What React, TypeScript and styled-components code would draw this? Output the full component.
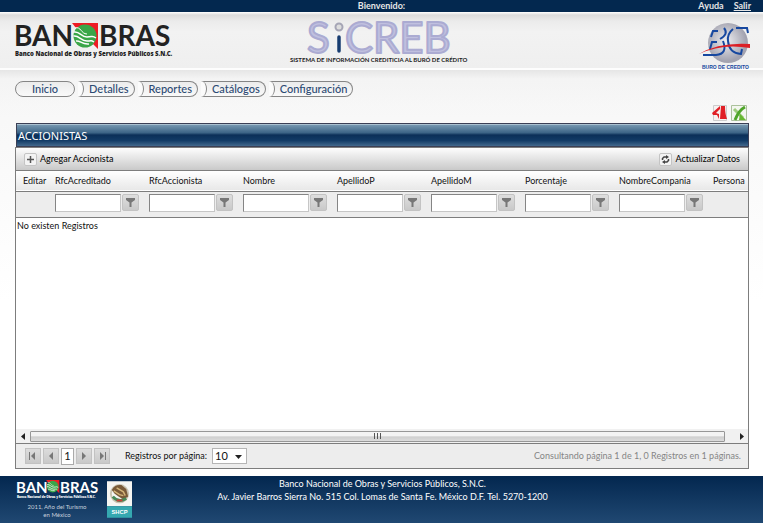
import React from "react";
import styled, { createGlobalStyle } from "styled-components";

const GlobalStyle = createGlobalStyle`
  *, *::before, *::after { box-sizing: border-box; }
  html, body, #root { height: 100%; }
  body {
    margin: 0;
    background: #fff;
    color: #111;
    font: 9px/14px Lato, "Open Sans", sans-serif;
  }
  button, input, select { font: inherit; color: inherit; margin: 0; padding: 0; }
  button { cursor: pointer; }
`;

const edge = "#7d7d7d";

const Page = styled.div`
  display: flex;
  flex-direction: column;
  min-height: 100%;
  background: linear-gradient(#f2f2f2, #f8f8f8 120px, #fff 300px);
`;

const TopBar = styled.div`
  display: grid;
  grid-template-columns: 1fr auto 1fr;
  align-items: center;
  height: 12px;
  padding: 0 12px;
  background: #03284f;
  color: #e6e6e6;
  font-weight: 700;
  line-height: 12px;
`;

const TopLinks = styled.nav`
  display: flex;
  justify-content: flex-end;
  gap: 10px;
`;

const TopLink = styled.a<{ $underlined?: boolean }>`
  color: inherit;
  text-decoration: ${(p) => (p.$underlined ? "underline" : "none")};
`;

const Header = styled.header`
  display: grid;
  grid-template-columns: 1fr auto 1fr;
  height: 58px;
  padding: 8px 12px 0 15px;
  border-bottom: 2px solid #fdfdfd;
  background: linear-gradient(#fff, #dcdcdc 3px, #ebebeb 9px, #f2f2f2 20px, #efefef);

  & > :last-child { justify-self: end; }
`;

const Drawing = styled.svg`
  display: block;
  overflow: visible;
`;

const Menu = styled.nav`
  display: flex;
  gap: 3px;
  padding: 11px 15px 8px;
  background: linear-gradient(#e6e6e6, #f4f4f4 9px, transparent);
`;

const MenuButton = styled.button<{ $first?: boolean }>`
  position: relative;
  height: 16px;
  padding: ${(p) => (p.$first ? "0 16px" : "0 5px 0 11px")};
  border: 1px solid #858585;
  border-left-width: ${(p) => (p.$first ? "1px" : "0")};
  border-radius: ${(p) => (p.$first ? "8px" : "0 8px 8px 0")};
  background: linear-gradient(#ececec, #f9f9f9);
  color: #2c4a73;
  font-size: 11px;
  font-weight: 500;

  &::before {
    content: "";
    display: ${(p) => (p.$first ? "none" : "block")};
    position: absolute;
    inset: -1px auto -1px 0;
    width: 6px;
    border: solid #858585;
    border-width: 0 1px 0 0;
    border-radius: 0 6px 6px 0 / 0 8px 8px 0;
    background: #fbfbfb;
  }
`;

const Content = styled.main`
  display: flex;
  flex: 1;
  flex-direction: column;
  padding: 0 14px 7px 15px;
`;

const ExportBar = styled.div`
  display: flex;
  justify-content: flex-end;
  gap: 3px;
  padding: 0 2px 2px 0;
`;

const ExportButton = styled.button`
  display: flex;
  border: 0;
  background: none;
`;

const Title = styled.h1`
  margin: 0 0 0 1px;
  height: 24px;
  padding-left: 1px;
  border: 1px solid #3b3f55;
  box-shadow: inset 0 1px #a9c0d0;
  background: linear-gradient(#7c9db5, #3c6486 40%, #0b2f58 50%, #123b66 75%, #42688c);
  color: #fff;
  font: 400 11px/24px "Noto Sans", sans-serif;
`;

const Panel = styled.section`
  display: flex;
  flex: 1;
  flex-direction: column;
  border: 1px solid ${edge};
  background: #fff;
`;

const Toolbar = styled.div`
  display: flex;
  justify-content: space-between;
  align-items: center;
  height: 23px;
  padding: 0 8px;
  border-bottom: 1px solid ${edge};
  background: linear-gradient(#fdfdfd, #c9c9c9);
`;

const ToolButton = styled.button`
  display: flex;
  align-items: center;
  gap: 3px;
  border: 0;
  background: none;
  color: #000;
`;

const ToolIcon = styled.svg`
  width: 13px;
  height: 13px;
  border: 1px solid #c4c4c4;
  border-radius: 2px;
  background: #f3f3f3;
`;

const Table = styled.table`
  width: 100%;
  table-layout: fixed;
  border-collapse: collapse;
`;

const Col = styled.col<{ $width?: number }>`
  width: ${(p) => (p.$width ? `${p.$width}px` : "auto")};
`;

const HeadRow = styled.tr`
  height: 20px;
  border-bottom: 1px solid ${edge};
  background: linear-gradient(#fff, #e8e8e8);
`;

const FilterRow = styled.tr`
  height: 26px;
  border-bottom: 1px solid ${edge};
  background: #ededed;
`;

const HeadCell = styled.th`
  padding: 1px 0 0 7px;
  font-weight: 400;
  text-align: left;
  white-space: nowrap;
`;

const FilterCell = styled.td`
  padding: 0 0 3px 7px;
`;

const Filter = styled.div`
  display: flex;
  gap: 1px;
`;

const FilterInput = styled.input`
  width: 66px;
  height: 18px;
  padding: 0 2px;
  border: 1px solid #c6c6c6;
  border-top-color: #858585;
  border-left-color: #858585;
  background: #fff;
`;

const FilterButton = styled.button`
  display: grid;
  place-items: center;
  width: 17px;
  height: 17px;
  border: 1px solid #c3c3c3;
  border-radius: 2px;
  background: linear-gradient(#dedede, #c9c9c9);
`;

const EmptyCell = styled.td`
  padding: 1px;
`;

const Scrollbar = styled.div`
  display: flex;
  align-items: center;
  height: 14px;
  margin-top: auto;
  background: #f1f1f1;
`;

const ScrollArrow = styled.button`
  display: grid;
  place-items: center;
  width: 14px;
  border: 0;
  background: none;
`;

const ScrollTrack = styled.div`
  flex: 1;
  padding-right: 9px;
`;

const ScrollThumb = styled.div`
  display: flex;
  justify-content: center;
  align-items: center;
  gap: 2px;
  height: 11px;
  border: 1px solid #979797;
  border-radius: 1px;
  background: linear-gradient(#f3f3f3 40%, #cfcfcf 55%, #dcdcdc);
`;

const Grip = styled.span`
  width: 1px;
  height: 6px;
  background: #555;
`;

const Pager = styled.div`
  display: flex;
  justify-content: space-between;
  align-items: center;
  height: 25px;
  padding: 0 7px 0 9px;
  border-top: 1px solid ${edge};
  background: #ededed;
`;

const PagerGroup = styled.div`
  display: flex;
  align-items: center;
  gap: 2px;
`;

const PageButton = styled.button<{ $current?: boolean }>`
  display: grid;
  place-items: center;
  width: ${(p) => (p.$current ? "13px" : "16px")};
  height: ${(p) => (p.$current ? "17px" : "16px")};
  border: 1px solid ${(p) => (p.$current ? "#aaa" : "#c2c2c2")};
  background: ${(p) => (p.$current ? "#fff" : "linear-gradient(#dcdcdc, #c9c9c9)")};
  font-size: 11px;
`;

const SizeLabel = styled.label`
  display: flex;
  align-items: center;
  gap: 5px;
  margin-left: 13px;
`;

const SelectBox = styled.span`
  display: grid;
  align-items: center;
  width: 35px;
  height: 16px;
  border: 1px solid #b5b5b5;
  background: #fff;

  & > * { grid-area: 1 / 1; }
  & > svg { justify-self: end; margin-right: 4px; pointer-events: none; }
`;

const SizeSelect = styled.select`
  width: 100%;
  padding-left: 2px;
  border: 0;
  background: none;
  appearance: none;
  font-size: 11px;
`;

const Summary = styled.span`
  color: #858585;
`;

const Footer = styled.footer`
  display: grid;
  grid-template-columns: 1fr auto 1fr;
  height: 47px;
  padding: 0 15px 0 17px;
  background: linear-gradient(#03274f, #204872);
  color: #fff;
`;

const FooterLogos = styled.div`
  display: flex;
  gap: 8px;
  padding-top: 5px;
`;

const Address = styled.address`
  padding-top: 1px;
  font-style: normal;
  line-height: 13px;
  text-align: center;
`;

function Emblem() {
  return (
    <g>
      <path d="M57 0H83V26L77 20L61 5Z" fill="#ee1c25" />
      <circle cx="70" cy="13" r="11.5" fill="#3aa648" />
      <path d="M59 9C65 8 66 14 72 14S77 12 81 15M58.500 13C64 12 66 18 72 18S76 17 79 19M61 18C65 17 67 22 74 21" fill="none" stroke="#fff" strokeWidth="1.500" />
      <path d="M60 5C66 3 66 11 72 11" fill="none" stroke="#fff" strokeWidth="1" />
    </g>
  );
}

function Banobras() {
  return (
    <Drawing width="158" height="38" viewBox="0 -3 158 38" role="img" aria-label="Banobras">
      <g fill="#222" fontFamily="Lato, sans-serif" fontSize="28" fontWeight="700">
        <text x="-1" y="23">BAN</text>
        <text x="84" y="23">BRAS</text>
      </g>
      <text x="0" y="33" fill="#222" fontSize="6" fontWeight="900" fontFamily="Noto Sans, sans-serif">Banco Nacional de Obras y Servicios Públicos S.N.C.</text>
      <Emblem />
    </Drawing>
  );
}

function Sicreb() {
  return (
    <Drawing width="186" height="46" viewBox="0 0 186 46" role="img" aria-label="SiCREB">
      <g fontFamily="Lato, sans-serif" fontSize="42" fill="#c0c0df" stroke="#ababd2" strokeWidth="2" strokeLinejoin="round">
        <text x="17" y="33">S</text>
        <text x="55" y="33">CREB</text>
      </g>
      <circle cx="49" cy="7" r="3.500" fill="#ddd" stroke="#a5a5b5" strokeWidth="2" />
      <path d="M49 17V31" stroke="#173c70" strokeWidth="3.500" strokeLinecap="round" />
      <text x="0" y="42" fontFamily="Lato, sans-serif" fontSize="6" fontWeight="700" fill="#222">SISTEMA DE INFORMACIÓN CREDITICIA AL BURÓ DE CRÉDITO</text>
    </Drawing>
  );
}

function BuroLogo() {
  return (
    <Drawing width="52" height="50" viewBox="0 0 52 50" role="img" aria-label="Buró de Crédito">
      <defs>
        <radialGradient id="globe" cx="0.45" cy="0.45">
          <stop offset="0" stopColor="#efeff2" />
          <stop offset="1" stopColor="#a3a3b0" />
        </radialGradient>
      </defs>
      <circle cx="29" cy="23" r="20" fill="url(#globe)" />
      <g fill="none" stroke="#1748a0" strokeWidth="2">
        <path d="M12 17L14 11H19M25 8Q30 14 21 19" />
        <path d="M11 29L13 22H18M24 21Q29 34 17 35H4" />
        <path d="M49 13L48 8H37M34 9Q28 14 29 21Q30 33 42 34L43 29" />
      </g>
      <path d="M0 34Q20 22 51 24V28Q23 23 0 34Z" fill="#dc1f26" />
      <text x="3" y="49" fontFamily="Liberation Sans, sans-serif" fontSize="5" fontWeight="700" fill="#1748a0">BURO DE CREDITO</text>
    </Drawing>
  );
}

function Shcp() {
  return (
    <Drawing width="25" height="37" viewBox="0 0 26 38" role="img" aria-label="SHCP">
      <path d="M0 0H26V26H0Z" fill="#f5f5f2" />
      <path d="M0 26H26V38H0Z" fill="#35a8b0" />
      <circle cx="13" cy="13" r="9" fill="none" stroke="#c9c3b0" strokeWidth="2" />
      <path d="M5 9Q8 3 15 4L20 8L22 16L17 19L12 16L8 13Z" fill="#795a38" />
      <path d="M10 7L17 11L19 15M7 10L13 14L17 15" stroke="#d3b478" strokeWidth="1.500" fill="none" />
      <path d="M6 16Q12 23 20 18" stroke="#478957" strokeWidth="3" fill="none" />
      <path d="M10 20H16" stroke="#c74037" strokeWidth="2" />
      <text x="13" y="34" textAnchor="middle" fontFamily="Liberation Sans, sans-serif" fontSize="6" fontWeight="700" fill="#fff">SHCP</text>
    </Drawing>
  );
}

function PdfIcon() {
  return (
    <svg width="16" height="16" viewBox="0 0 16 16">
      <path d="M1.500 .5H14.500V15.500H1.500Z" fill="#f7f0f0" stroke="#ccc" />
      <path d="M9 1H13Q13 9 15 14H8Z" fill="#e01f26" />
      <path d="M8 1L0 8L1 10L5 10L7 14V9L4 8L8 4Z" fill="#e01f26" />
    </svg>
  );
}

function ExcelIcon() {
  return (
    <svg width="16" height="16" viewBox="0 0 16 16">
      <path d="M.5 .5H15.500V15.500H.5Z" fill="#f3f6ef" stroke="#abc19c" />
      <path d="M3 4L12 13" stroke="#9ccb7c" strokeWidth="3" />
      <path d="M14 2Q8 5 4 15" fill="none" stroke="#4fa52a" strokeWidth="3" />
      <path d="M9 9L15 15H8Z" fill="#65b72f" />
    </svg>
  );
}

function FunnelIcon() {
  return (
    <svg width="9" height="9" viewBox="0 0 9 9">
      <path d="M0 0H9V2L5.500 4.500V9H3.500V4.500L0 2Z" fill="#777" />
    </svg>
  );
}

type Step = "first" | "prev" | "next" | "last";

function StepIcon({ step }: { step: Step }) {
  const back = step === "first" || step === "prev";
  return (
    <svg width="8" height="8" viewBox="0 0 8 8" fill="#777">
      <path d={back ? "M6 0V8L2 4Z" : "M2 0V8L6 4Z"} />
      {step === "first" && <path d="M0 0H1V8H0Z" />}
      {step === "last" && <path d="M7 0H8V8H7Z" />}
    </svg>
  );
}

function ArrowIcon({ d }: { d: string }) {
  return (
    <svg width="7" height="7" viewBox="0 0 7 7">
      <path d={d} fill="#222" />
    </svg>
  );
}

const menu = ["Inicio", "Detalles", "Reportes", "Catálogos", "Configuración"];
const filtered = ["RfcAcreditado", "RfcAccionista", "Nombre", "ApellidoP", "ApellidoM", "Porcentaje", "NombreCompania"];

export default function App() {
  return (
    <Page>
      <GlobalStyle />
      <TopBar>
        <span />
        <span>Bienvenido:</span>
        <TopLinks>
          <TopLink href="#ayuda">Ayuda</TopLink>
          <TopLink href="#salir" $underlined>Salir</TopLink>
        </TopLinks>
      </TopBar>
      <Header>
        <Banobras />
        <Sicreb />
        <BuroLogo />
      </Header>
      <Menu>
        {menu.map((item, i) => (
          <MenuButton key={item} $first={i === 0}>{item}</MenuButton>
        ))}
      </Menu>
      <Content>
        <ExportBar>
          <ExportButton aria-label="Exportar a PDF"><PdfIcon /></ExportButton>
          <ExportButton aria-label="Exportar a Excel"><ExcelIcon /></ExportButton>
        </ExportBar>
        <Title>ACCIONISTAS</Title>
        <Panel>
          <Toolbar>
            <ToolButton>
              <ToolIcon viewBox="0 0 11 11">
                <path d="M5.500 2V9M2 5.500H9" stroke="#555" strokeWidth="1.500" />
              </ToolIcon>
              Agregar Accionista
            </ToolButton>
            <ToolButton>
              <ToolIcon viewBox="0 0 11 11">
                <path d="M2.500 6V4.500L4 3H7M8.500 5V6.500L7 8H4" fill="none" stroke="#444" strokeWidth="1.500" />
                <path d="M6 1L9 3L6 5ZM5 6L2 8L5 10Z" fill="#444" />
              </ToolIcon>
              Actualizar Datos
            </ToolButton>
          </Toolbar>
          <Table>
            <colgroup>
              <Col $width={32} />
              {filtered.map((name) => <Col key={name} $width={94} />)}
              <Col />
            </colgroup>
            <thead>
              <HeadRow>
                <HeadCell>Editar</HeadCell>
                {filtered.map((name) => <HeadCell key={name}>{name}</HeadCell>)}
                <HeadCell>Persona</HeadCell>
              </HeadRow>
              <FilterRow>
                <FilterCell />
                {filtered.map((name) => (
                  <FilterCell key={name}>
                    <Filter>
                      <FilterInput aria-label={name} />
                      <FilterButton aria-label={`Filtrar ${name}`}><FunnelIcon /></FilterButton>
                    </Filter>
                  </FilterCell>
                ))}
                <FilterCell />
              </FilterRow>
            </thead>
            <tbody>
              <tr>
                <EmptyCell colSpan={9}>No existen Registros</EmptyCell>
              </tr>
            </tbody>
          </Table>
          <Scrollbar>
            <ScrollArrow aria-label="Desplazar a la izquierda"><ArrowIcon d="M5 0V7L1 3.500Z" /></ScrollArrow>
            <ScrollTrack>
              <ScrollThumb><Grip /><Grip /><Grip /></ScrollThumb>
            </ScrollTrack>
            <ScrollArrow aria-label="Desplazar a la derecha"><ArrowIcon d="M2 0V7L6 3.500Z" /></ScrollArrow>
          </Scrollbar>
          <Pager>
            <PagerGroup>
              <PageButton aria-label="Primera"><StepIcon step="first" /></PageButton>
              <PageButton aria-label="Anterior"><StepIcon step="prev" /></PageButton>
              <PageButton $current>1</PageButton>
              <PageButton aria-label="Siguiente"><StepIcon step="next" /></PageButton>
              <PageButton aria-label="Última"><StepIcon step="last" /></PageButton>
              <SizeLabel>
                Registros por página:
                <SelectBox>
                  <SizeSelect defaultValue="10">
                    <option>10</option>
                    <option>20</option>
                    <option>50</option>
                  </SizeSelect>
                  <ArrowIcon d="M0 2H7L3.500 6Z" />
                </SelectBox>
              </SizeLabel>
            </PagerGroup>
            <Summary>Consultando página 1 de 1, 0 Registros en 1 páginas.</Summary>
          </Pager>
        </Panel>
      </Content>
      <Footer>
        <FooterLogos>
          <Drawing width="82" height="40" viewBox="0 0 82 40" role="img" aria-label="Banobras 2011, Año del Turismo en México">
            <g fill="#fff" fontFamily="Lato, sans-serif">
              <g fontSize="15" fontWeight="700">
                <text x="-1" y="12">BAN</text>
                <text x="43" y="12">BRAS</text>
              </g>
              <text x="0" y="17" fontSize="3" fontWeight="900" fontFamily="Noto Sans, sans-serif">Banco Nacional de Obras y Servicios Públicos S.N.C.</text>
              <g fontSize="6" fill="#c6d0dc" textAnchor="middle">
                <text x="40" y="28">2011, Año del Turismo</text>
                <text x="40" y="36">en México</text>
              </g>
            </g>
            <g transform="translate(0 -1) scale(0.51)"><Emblem /></g>
          </Drawing>
          <Shcp />
        </FooterLogos>
        <Address>
          Banco Nacional de Obras y Servicios Públicos, S.N.C.
          <br />
          Av. Javier Barros Sierra No. 515 Col. Lomas de Santa Fe. México D.F. Tel. 5270-1200
        </Address>
      </Footer>
    </Page>
  );
}
